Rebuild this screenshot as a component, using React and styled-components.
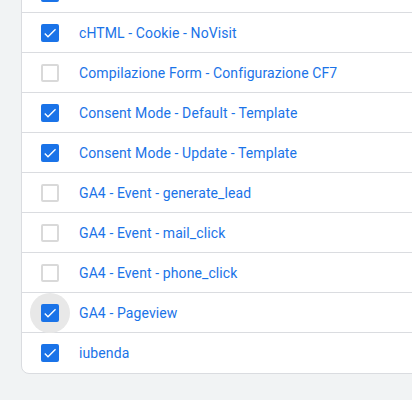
import React from 'react'
import styled, { createGlobalStyle } from 'styled-components'

const Global = createGlobalStyle`
  html, body {
    margin: 0;
    padding: 0;
    background: #f1f3f4;
    overflow: hidden;
    font-family: Roboto, "Liberation Sans", Arial, sans-serif;
  }
`

const Page = styled.div`
  width: 412px;
  height: 400px;
  overflow: hidden;
  padding-left: 21px;
  box-sizing: border-box;
`

const Card = styled.div`
  margin-top: -28px;
  width: 520px;
  background: #fff;
  border: 1px solid #dadce0;
  border-radius: 0 0 8px 8px;
  overflow: hidden;
`

const Row = styled.div`
  height: 40px;
  box-sizing: border-box;
  display: flex;
  align-items: center;
  border-bottom: 1px solid #dadce0;
  &:last-child {
    border-bottom: none;
  }
`

const BoxCell = styled.div`
  width: 57px;
  display: flex;
  align-items: center;
  padding-left: 8px;
  box-sizing: border-box;
`

const Halo = styled.div`
  width: 40px;
  height: 40px;
  border-radius: 50%;
  display: flex;
  align-items: center;
  justify-content: center;
  background: ${p => (p.$hover ? '#e8e8e8' : 'transparent')};
`

const Box = styled.div`
  width: 18px;
  height: 18px;
  box-sizing: border-box;
  border-radius: 2px;
  display: flex;
  align-items: center;
  justify-content: center;
  background: ${p => (p.$on ? '#1a73e8' : '#fff')};
  border: ${p => (p.$on ? 'none' : '2px solid #d9d9d9')};
`

const Name = styled.span`
  font-size: 14px;
  color: #1a73e8;
  letter-spacing: 0.1px;
`

const tags = [
  { name: 'cHTML - Cookie - Visit', on: true },
  { name: 'cHTML - Cookie - NoVisit', on: true },
  { name: 'Compilazione Form - Configurazione CF7', on: false },
  { name: 'Consent Mode - Default - Template', on: true },
  { name: 'Consent Mode - Update - Template', on: true },
  { name: 'GA4 - Event - generate_lead', on: false },
  { name: 'GA4 - Event - mail_click', on: false },
  { name: 'GA4 - Event - phone_click', on: false },
  { name: 'GA4 - Pageview', on: true, hover: true },
  { name: 'iubenda', on: true },
]

function Check() {
  return (
    <svg width="16" height="16" viewBox="0 0 24 24">
      <path d="M9 16.17L4.83 12l-1.42 1.41L9 19 21 7l-1.41-1.41z" fill="#fff" />
    </svg>
  )
}

export default function App() {
  return (
    <Page>
      <Global />
      <Card>
        {tags.map(t => (
          <Row key={t.name}>
            <BoxCell>
              <Halo $hover={t.hover}>
                <Box $on={t.on}>{t.on && <Check />}</Box>
              </Halo>
            </BoxCell>
            <Name>{t.name}</Name>
          </Row>
        ))}
      </Card>
    </Page>
  )
}
